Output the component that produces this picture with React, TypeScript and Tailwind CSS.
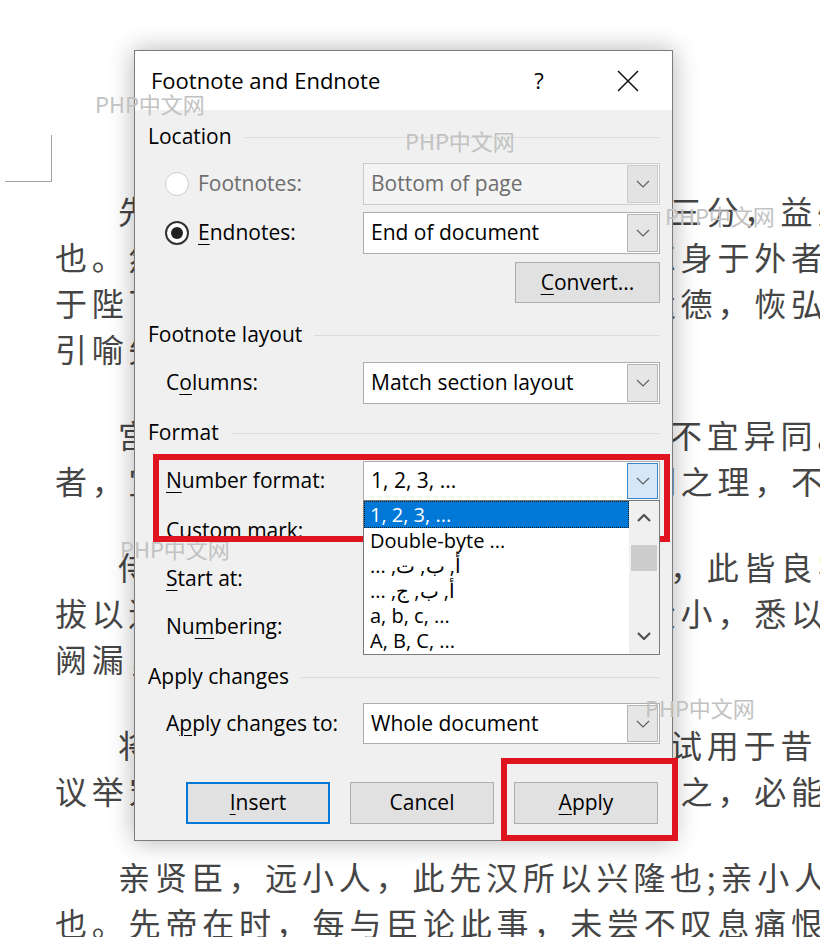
import type { ReactNode } from "react"

const paragraphs: string[][] = [
  [
    "先帝创业未半而中道崩殂，今天下三分，益州疲弊，此诚危急存亡之秋",
    "也。然侍卫之臣不懈于内，忠志之士忘身于外者，盖追先帝之殊遇，欲报之",
    "于陛下也。诚宜开张圣听，以光先帝遗德，恢弘志士之气，不宜妄自菲薄，",
    "引喻失义，以塞忠谏之路也。",
  ],
  [
    "宫中府中，俱为一体，陟罚臧否，不宜异同。若有作奸犯科及为忠善",
    "者，宜付有司论其刑赏，以昭陛下平明之理，不宜偏私，使内外异法也。",
  ],
  [
    "侍中、侍郎郭攸之、费祎、董允等，此皆良实，志虑忠纯，是以先帝简",
    "拔以遗陛下。愚以为宫中之事，事无大小，悉以咨之，然后施行，必能裨补",
    "阙漏，有所广益。",
  ],
  [
    "将军向宠，性行淑均，晓畅军事，试用于昔日，先帝称之曰能，是以众",
    "议举宠为督。愚以为营中之事，悉以咨之，必能使行阵和睦，优劣得所。",
  ],
  [
    "亲贤臣，远小人，此先汉所以兴隆也;亲小人，远贤臣，此后汉所以倾颓",
    "也。先帝在时，每与臣论此事，未尝不叹息痛恨于桓、灵也。",
  ],
]

const watermarks = [
  "left-[95px] top-[88px]",
  "left-[405px] top-[125px]",
  "left-[665px] top-[200px]",
  "left-[120px] top-[533px]",
  "left-[452px] top-[575px]",
  "left-[645px] top-[692px]",
]

function Chevron({ up = false, bold = false }: { up?: boolean; bold?: boolean }) {
  return (
    <svg width="14" height="8" viewBox="0 0 14 8" fill="none">
      <path
        d={up ? "M1 7L7 1L13 7" : "M1 1L7 7L13 1"}
        stroke={bold ? "#505050" : "#606060"}
        strokeWidth={bold ? 2.2 : 1.2}
      />
    </svg>
  )
}

function Select({
  value,
  disabled = false,
  focused = false,
  h = "h-[42px]",
  children,
}: {
  value: string
  disabled?: boolean
  focused?: boolean
  h?: string
  children?: ReactNode
}) {
  const box = disabled ? "border-[#cccccc] bg-[#f4f4f4]" : "border-[#adadad] bg-white"
  const btn = focused
    ? "border-[#3d84c6] bg-[#d6e7f7]"
    : disabled
      ? "border-[#cccccc] bg-[#e3e3e3]"
      : "border-[#b4b4b4] bg-[#e6e6e6]"
  return (
    <div className={`relative flex ${h} w-[297px] border ${box}`}>
      <div className={`flex flex-1 items-center pl-[7px] ${disabled ? "text-[#6d6d6d]" : "text-black"}`}>
        {value}
      </div>
      <div className={`m-px flex w-[31px] items-center justify-center border ${btn}`}>
        <Chevron />
      </div>
      {children}
    </div>
  )
}

function Radio({ checked = false, disabled = false }: { checked?: boolean; disabled?: boolean }) {
  return (
    <span
      className={`flex h-[24px] w-[24px] shrink-0 items-center justify-center rounded-full bg-white ${
        disabled ? "border border-[#cccccc]" : "border-2 border-[#333333]"
      }`}
    >
      {checked && <span className="h-[12px] w-[12px] rounded-full bg-[#222222]" />}
    </span>
  )
}

function Group({ title }: { title: string }) {
  return (
    <div className="flex h-[28px] items-center">
      <span>{title}</span>
      <span className="ml-[12px] h-px flex-1 bg-[#dcdcdc]" />
    </div>
  )
}

function Button({ children, w = "w-[144px]", h = "h-[42px]", primary = false }: { children: ReactNode; w?: string; h?: string; primary?: boolean }) {
  return (
    <div
      className={`flex ${w} ${h} items-center justify-center bg-[#e1e1e1] ${
        primary ? "border-2 border-[#0078d7]" : "border border-[#adadad]"
      }`}
    >
      {children}
    </div>
  )
}

function Key({ children }: { children: ReactNode }) {
  return <u className="decoration-1 underline-offset-[4px]">{children}</u>
}

const numberFormats = [
  { text: "1, 2, 3, ..." },
  { text: "Double-byte ..." },
  { text: "أ, ب, ت, ...", rtl: true },
  { text: "أ, ب, ج, ...", rtl: true },
  { text: "a, b, c, ..." },
  { text: "A, B, C, ..." },
]

function FormatList() {
  return (
    <div className="absolute left-[-1px] top-full z-10 flex h-[155px] w-[297px] border border-[#7a7a7a] bg-white text-[20px] leading-[25px]">
      <div className="flex-1 overflow-hidden">
        {numberFormats.map((f, i) => (
          <div
            key={f.text}
            className={
              i === 0
                ? "border border-dotted border-[#1d1d1d] bg-[#0078d7] pl-[5px] text-white"
                : "pl-[6px] text-black"
            }
          >
            {f.rtl ? <span dir="rtl">{f.text}</span> : f.text}
          </div>
        ))}
      </div>
      <div className="flex w-[30px] flex-col items-center bg-[#f0f0f0]">
        <div className="flex h-[34px] items-center">
          <Chevron up bold />
        </div>
        <div className="mt-[10px] h-[26px] w-[26px] bg-[#cdcdcd]" />
        <div className="flex-1" />
        <div className="flex h-[36px] items-center">
          <Chevron bold />
        </div>
      </div>
    </div>
  )
}

function FootnoteDialog() {
  return (
    <div className="absolute left-[134px] top-[50px] w-[539px] border border-[#7c7c7c] font-['Open_Sans',sans-serif] text-black shadow-[0_0_24px_rgba(0,0,0,0.3)]">
      <div className="flex h-[59px] items-center bg-white pl-[16px] pr-[22px] text-[22px]">
        <span className="flex-1">Footnote and Endnote</span>
        <span className="w-[44px] text-center">?</span>
        <span className="ml-[45px] flex w-[44px] justify-center">
          <svg width="22" height="22" viewBox="0 0 22 22">
            <path d="M1 1L21 21M21 1L1 21" stroke="#111" strokeWidth="1.5" />
          </svg>
        </span>
      </div>

      <div className="bg-[#f0f0f0] pb-[16px] pl-[13px] pr-[12px] pt-[13px] text-[21px]">
        <Group title="Location" />
        <div className="mt-[12px] flex h-[42px] items-center">
          <div className="flex w-[215px] items-center gap-[9px] pl-[17px] text-[#6d6d6d]">
            <Radio disabled />
            Footnotes:
          </div>
          <Select value="Bottom of page" disabled />
        </div>
        <div className="mt-[7px] flex h-[42px] items-center">
          <div className="flex w-[215px] items-center gap-[9px] pl-[17px]">
            <Radio checked />
            <span>
              <Key>E</Key>ndnotes:
            </span>
          </div>
          <Select value="End of document" />
        </div>
        <div className="mt-[8px] flex justify-end">
          <Button w="w-[145px]" h="h-[41px]">
            <span>
              <Key>C</Key>onvert...
            </span>
          </Button>
        </div>

        <div className="mt-[18px]">
          <Group title="Footnote layout" />
        </div>
        <div className="mt-[13px] flex h-[42px] items-center">
          <div className="w-[215px] pl-[18px]">
            C<Key>o</Key>lumns:
          </div>
          <Select value="Match section layout" />
        </div>

        <div className="mt-[15px]">
          <Group title="Format" />
        </div>
        <div className="mt-[14px] flex h-[40px] items-center">
          <div className="w-[215px] pl-[18px]">
            <Key>N</Key>umber format:
          </div>
          <Select value="1, 2, 3, ..." focused h="h-[40px]">
            <FormatList />
          </Select>
        </div>
        <div className="mt-[6px] flex h-[48px] items-center pl-[18px]">Custom mark:</div>
        <div className="flex h-[48px] items-center pl-[18px]">
          <span>
            <Key>S</Key>tart at:
          </span>
        </div>
        <div className="flex h-[48px] items-center pl-[18px]">
          <span>
            Nu<Key>m</Key>bering:
          </span>
        </div>

        <div className="mt-[12px]">
          <Group title="Apply changes" />
        </div>
        <div className="mt-[12px] flex h-[41px] items-center">
          <div className="w-[215px] pl-[18px]">
            A<Key>p</Key>ply changes to:
          </div>
          <Select value="Whole document" h="h-[41px]" />
        </div>

        <div className="mt-[38px] flex justify-end gap-[20px] pr-[2px]">
          <Button primary>
            <span>
              <Key>I</Key>nsert
            </span>
          </Button>
          <Button>Cancel</Button>
          <Button>
            <span>
              <Key>A</Key>pply
            </span>
          </Button>
        </div>
      </div>
    </div>
  )
}

export default function App() {
  return (
    <div className="relative h-[937px] w-[820px] overflow-hidden bg-white">
      <div className="pt-[135px]">
        <div className="ml-[5px] h-[47px] w-[47px] border-b border-r border-[#a3a3a3]" />
        <div className="mt-[5px] pl-[55px] font-['Noto_Sans_CJK_SC',sans-serif] text-[32px] tracking-[4.8px] text-[#454545]">
          {paragraphs.map((lines, p) => (
            <div key={p} className={p > 0 ? "mt-[40px]" : ""}>
              {lines.map((line, i) => (
                <div key={i} className={`h-[46px] whitespace-nowrap leading-[46px] ${i === 0 ? "pl-[63px]" : ""}`}>
                  {line}
                </div>
              ))}
            </div>
          ))}
        </div>
      </div>

      <FootnoteDialog />

      {watermarks.map((pos) => (
        <span
          key={pos}
          className={`absolute ${pos} font-['Noto_Sans_CJK_SC',sans-serif] text-[22px] leading-[30px] text-[#c2c2c2]`}
        >
          PHP中文网
        </span>
      ))}

      <div className="absolute left-[153px] top-[454px] h-[88px] w-[517px] border-[6px] border-[#e0141e]" />
      <div className="absolute left-[501px] top-[758px] h-[83px] w-[177px] border-[6px] border-[#e0141e]" />
    </div>
  )
}
